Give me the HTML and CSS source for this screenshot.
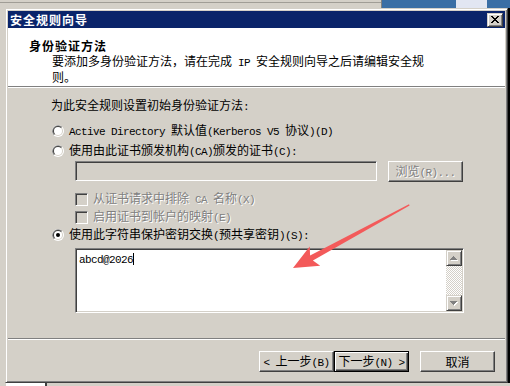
FILE: index.html
```html
<!DOCTYPE html>
<html lang="zh-CN">
<head>
    <meta charset="UTF-8">
    <title>安全规则向导</title>
    <link rel="stylesheet" href="styles.css">
</head>
<body>
    <svg class="sprites" width="0" height="0">
        <symbol id="radio" viewBox="0 0 12 12">
            <circle cx="6" cy="6" r="6" fill="#fff"/>
            <path d="M1.76 10.24A6 6 0 0 1 10.24 1.76Z" fill="#808080"/>
            <circle cx="6" cy="6" r="5" fill="#d4d0c8"/>
            <path d="M2.46 9.54A5 5 0 0 1 9.54 2.46Z" fill="#404040"/>
            <circle cx="6" cy="6" r="4" fill="#fff"/>
        </symbol>
    </svg>

    <div class="desk-top">
        <div class="desk-left"></div>
        <div class="desk-right"><span class="tray"></span></div>
    </div>

    <div class="desk-row">
        <div class="gutter-left"></div>

        <div class="dialog">
            <div class="titlebar">
                <span class="title">安全规则向导</span>
                <span class="close">
                    <svg width="8" height="7" viewBox="0 0 8 7" shape-rendering="crispEdges">
                        <path d="M0 0h2v1H0zM6 0h2v1H6zM1 1h2v1H1zM5 1h2v1H5zM2 2h4v1H2zM3 3h2v1H3zM2 4h4v1H2zM1 5h2v1H1zM5 5h2v1H5zM0 6h2v1H0zM6 6h2v1H6z" fill="#000"/>
                    </svg>
                </span>
            </div>

            <div class="header">
                <div class="h-title">身份验证方法</div>
                <p class="h-sub">要添加多身份验证方法，请在完成<span class="en"> IP </span>安全规则向导之后请编辑安全规<br>则。</p>
            </div>

            <div class="content">
                <div class="intro">为此安全规则设置初始身份验证方法<span class="en">:</span></div>

                <div class="opt opt-ad">
                    <svg class="radio"><use href="#radio"/></svg>
                    <span><span class="en">Active Directory </span>默认值<span class="en">(Kerberos V5 </span>协议<span class="en">)(D)</span></span>
                </div>

                <div class="opt opt-ca">
                    <svg class="radio"><use href="#radio"/></svg>
                    <span>使用由此证书颁发机构<span class="en">(CA)</span>颁发的证书<span class="en">(C):</span></span>
                </div>

                <div class="cert-row">
                    <div class="field"></div>
                    <button class="btn is-disabled"><span>浏览<span class="en">(R)...</span></span></button>
                </div>

                <div class="check-row chk-exclude">
                    <span class="check"></span>
                    <span class="muted">从证书请求中排除<span class="en"> CA </span>名称<span class="en">(X)</span></span>
                </div>

                <div class="check-row chk-map">
                    <span class="check"></span>
                    <span class="muted">启用证书到帐户的映射<span class="en">(E)</span></span>
                </div>

                <div class="opt opt-psk">
                    <svg class="radio" viewBox="0 0 12 12"><use href="#radio"/><circle cx="6" cy="6" r="2" fill="#000"/></svg>
                    <span>使用此字符串保护密钥交换<span class="en">(</span>预共享密钥<span class="en">)(S):</span></span>
                </div>

                <div class="memo">
                    <div class="memo-text"><span class="en">abcd@2026</span><span class="caret"></span></div>
                    <div class="vscroll">
                        <span class="sb-btn">
                            <svg width="8" height="5" viewBox="0 0 8 5" shape-rendering="crispEdges">
                                <path d="M3 0h1v1H3zM2 1h3v1H2zM1 2h5v1H1zM0 3h7v1H0z" fill="#fff" transform="translate(1 1)"/>
                                <path d="M3 0h1v1H3zM2 1h3v1H2zM1 2h5v1H1zM0 3h7v1H0z" fill="#808080"/>
                            </svg>
                        </span>
                        <span class="sb-track"></span>
                        <span class="sb-btn">
                            <svg width="8" height="5" viewBox="0 0 8 5" shape-rendering="crispEdges">
                                <path d="M0 0h7v1H0zM1 1h5v1H1zM2 2h3v1H2zM3 3h1v1H3z" fill="#fff" transform="translate(1 1)"/>
                                <path d="M0 0h7v1H0zM1 1h5v1H1zM2 2h3v1H2zM3 3h1v1H3z" fill="#808080"/>
                            </svg>
                        </span>
                    </div>
                </div>
            </div>

            <div class="footer">
                <button class="btn"><span><span class="en">&lt; </span>上一步<span class="en">(B)</span></span></button>
                <button class="btn btn-default"><span>下一步<span class="en">(N) &gt;</span></span></button>
                <button class="btn btn-cancel"><span>取消</span></button>
            </div>
        </div>

        <div class="gutter-right"></div>
    </div>

    <div class="desk-bottom">
        <span class="b-gap"></span>
        <span class="b-white"></span>
        <span class="b-edge"></span>
    </div>

    <!-- annotation arrow drawn over the screenshot -->
    <svg class="annot" width="510" height="386" viewBox="0 0 510 386">
        <polygon points="409,204.3 310.1,255.4 309.7,246.4 293,268 320.2,265.8 312.9,260.6 409.6,205.5" fill="#f35a5a"/>
    </svg>
</body>
</html>
```

FILE: styles.css
```css
* {
    margin: 0;
    padding: 0;
    box-sizing: border-box;
}

body {
    position: relative;
    width: 510px;
    height: 386px;
    overflow: hidden;
    background: #d4d0c8;
    color: #000;
    font-family: "Noto Sans CJK SC", sans-serif;
    font-size: 12px;
}

.sprites {
    position: absolute;
}

.en {
    font-family: "Liberation Mono", monospace;
    font-size: 11px;
    letter-spacing: -0.6px;
}

/* what is behind the dialog */
.desk-top {
    display: flex;
    height: 8px;
}

.desk-left {
    width: 381px;
    background: linear-gradient(#d4d0c8 2px, #a09d96 2px 3px, #d4d0c8 3px);
}

.desk-right {
    flex: 1;
    display: flex;
    background: #3a6ea5;
    border-left: 1px solid #808080;
}

.tray {
    width: 31px;
    margin-left: 74px;
    background: #e2e6f2;
}

.desk-row {
    display: flex;
    height: 375px;
}

.gutter-left {
    width: 5px;
}

.gutter-right {
    width: 2px;
    background: #000;
}

.desk-bottom {
    display: flex;
    height: 3px;
}

.b-gap {
    width: 6px;
}

.b-white {
    width: 39px;
    background: #fff;
}

.b-edge {
    width: 2px;
    background: #404040;
}

/* dialog frame */
.dialog {
    width: 503px;
    height: 375px;
    display: flex;
    flex-direction: column;
    padding: 2px;
    background: #d4d0c8;
    border: 1px solid;
    border-color: #d4d0c8 #404040 #404040 #d4d0c8;
    box-shadow: inset 1px 1px #fff, inset -1px -1px #808080;
}

.titlebar {
    flex: none;
    height: 17px;
    display: flex;
    align-items: center;
    justify-content: space-between;
    padding: 0 2px;
    background: #0a246a;
    color: #fff;
}

.title {
    font-weight: bold;
    letter-spacing: 1px;
    line-height: 17px;
}

.close {
    width: 16px;
    height: 14px;
    display: flex;
    align-items: center;
    justify-content: center;
    background: #d4d0c8;
    border: 1px solid;
    border-color: #d4d0c8 #404040 #404040 #d4d0c8;
    box-shadow: inset 1px 1px #fff, inset -1px -1px #808080;
}

.header {
    flex: none;
    height: 59px;
    padding: 11px 0 0 21px;
    background: #fff;
    border-bottom: 1px solid #808080;
}

.h-title {
    font-weight: bold;
    letter-spacing: 1px;
    line-height: 14px;
}

.h-sub {
    margin: 1px 0 0 23px;
    line-height: 13px;
}

/* page body */
.content {
    flex: none;
    height: 251px;
    padding: 10px 0 0 44px;
    border-top: 1px solid #fff;
}

.intro {
    margin-left: -1px;
    height: 14px;
    line-height: 14px;
}

.opt {
    display: flex;
    align-items: center;
    gap: 5px;
    height: 14px;
    line-height: 14px;
}

.radio {
    flex: none;
    width: 12px;
    height: 12px;
}

.opt-ad {
    margin-top: 12px;
}

.opt-ca {
    margin-top: 6px;
}

.opt-psk {
    margin-top: 4px;
}

.cert-row {
    display: flex;
    align-items: flex-start;
    gap: 11px;
    height: 21px;
    margin: 3px 0 0 23px;
}

.field {
    width: 302px;
    height: 20px;
    background: #d4d0c8;
    border: 1px solid;
    border-color: #808080 #fff #fff #808080;
    box-shadow: inset 1px 1px #404040, inset -1px -1px #d4d0c8;
}

.check-row {
    display: flex;
    align-items: center;
    gap: 5px;
    height: 14px;
    line-height: 14px;
    margin-left: 23px;
}

.chk-exclude {
    margin-top: 10px;
}

.chk-map {
    margin-top: 4px;
}

.check {
    flex: none;
    width: 13px;
    height: 13px;
    background: #d4d0c8;
    border: 1px solid;
    border-color: #808080 #fff #fff #808080;
    box-shadow: inset 1px 1px #404040, inset -1px -1px #d4d0c8;
}

.muted,
.is-disabled {
    color: #808080;
    text-shadow: 1px 1px 0 #fff;
}

.memo {
    display: flex;
    width: 389px;
    height: 65px;
    margin: 6px 0 0 23px;
    padding: 1px;
    background: #fff;
    border: 1px solid;
    border-color: #808080 #fff #fff #808080;
    box-shadow: inset 1px 1px #404040, inset -1px -1px #d4d0c8;
}

.memo-text {
    flex: 1;
    padding: 1px 2px;
    line-height: 13px;
}

.caret {
    display: inline-block;
    width: 1px;
    height: 12px;
    vertical-align: -2px;
    background: #000;
}

.vscroll {
    width: 16px;
    display: flex;
    flex-direction: column;
}

.sb-btn {
    height: 16px;
    display: flex;
    align-items: center;
    justify-content: center;
    background: #d4d0c8;
    border: 1px solid;
    border-color: #d4d0c8 #404040 #404040 #d4d0c8;
    box-shadow: inset 1px 1px #fff, inset -1px -1px #808080;
}

.sb-track {
    flex: 1;
    background: repeating-conic-gradient(#fff 0 25%, #d4d0c8 0 50%) 0 0 / 2px 2px;
}

/* bottom buttons */
.footer {
    flex: 1;
    display: flex;
    align-items: flex-start;
    justify-content: flex-end;
    padding: 12px 10px 0 0;
    border-top: 1px solid #808080;
    box-shadow: inset 0 1px #fff;
}

.btn {
    width: 75px;
    height: 21px;
    display: flex;
    align-items: center;
    justify-content: center;
    font: inherit;
    line-height: 14px;
    color: #000;
    background: #d4d0c8;
    border: 1px solid;
    border-color: #fff #404040 #404040 #fff;
    box-shadow: inset -1px -1px #808080;
}

.btn.is-disabled {
    color: #808080;
}

.btn-default {
    border-color: #000;
    box-shadow: inset 1px 1px #fff, inset -1px -1px #404040, inset -2px -2px #808080;
}

.btn-cancel {
    margin-left: 11px;
}

.annot {
    position: absolute;
    left: 0;
    top: 0;
    pointer-events: none;
}
```
